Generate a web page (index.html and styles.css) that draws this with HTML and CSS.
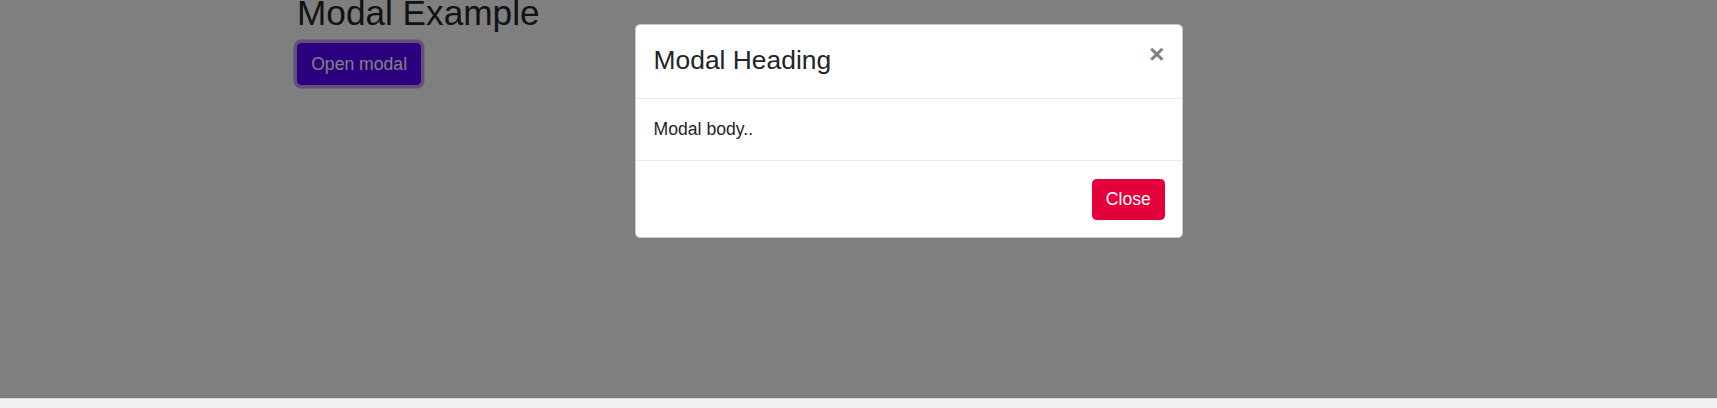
FILE: index.html
```html
<!DOCTYPE html>
<html lang="en">
<head>
<meta charset="utf-8">
<title>Modal Example</title>
<link rel="stylesheet" href="styles.css">
</head>
<body>
  <div class="viewport">
    <div class="container">
      <h2 class="page-title">Modal Example</h2>
      <button class="btn btn-primary" type="button">Open modal</button>
    </div>

    <div class="backdrop"></div>

    <div class="modal">
      <div class="modal-dialog">
        <div class="modal-header">
          <h4 class="modal-title">Modal Heading</h4>
          <button class="close" type="button" aria-label="Close">&times;</button>
        </div>
        <div class="modal-body">Modal body..</div>
        <div class="modal-footer">
          <button class="btn btn-danger" type="button">Close</button>
        </div>
      </div>
    </div>
  </div>
  <div class="hscroll"></div>
</body>
</html>
```

FILE: styles.css
```css
* {
  box-sizing: border-box;
}

html, body {
  margin: 0;
  padding: 0;
}

body {
  width: 1717px;
  height: 408px;
  display: flex;
  flex-direction: column;
  font-family: "Liberation Sans", Arial, sans-serif;
  font-size: 17.6px;
  line-height: 26.4px;
  color: #212529;
  background: #ffffff;
  overflow: hidden;
}

.viewport {
  position: relative;
  height: 398px;
  flex: none;
  overflow: hidden;
}

.container {
  padding-left: 297px;
}

.page-title {
  margin: -8px 0 9px 0;
  font-size: 35.2px;
  line-height: 42.2px;
  font-weight: 400;
  color: #212529;
}

.btn {
  display: inline-block;
  font-family: inherit;
  font-size: 17.6px;
  line-height: 26.4px;
  padding: 6.6px 13.2px;
  border: 1px solid transparent;
  border-radius: 4.4px;
  cursor: pointer;
}

.btn-primary {
  color: #ffffff;
  background: #5500ff;
  border-color: #5500ff;
  box-shadow: 0 0 0 3.5px rgba(170, 128, 255, 0.75);
}

.btn-danger {
  color: #ffffff;
  background: #e4003a;
  border-color: #e4003a;
}

.backdrop {
  position: absolute;
  inset: 0;
  background: rgba(0, 0, 0, 0.5);
}

.modal {
  position: absolute;
  inset: 0;
}

.modal-dialog {
  width: 548px;
  margin: 24px 0 0 635px;
  background: #ffffff;
  border: 1px solid rgba(0, 0, 0, 0.2);
  border-radius: 5.3px;
  display: flex;
  flex-direction: column;
}

.modal-header {
  display: flex;
  align-items: flex-start;
  padding: 16px 17.6px 18px 17.6px;
  border-bottom: 1px solid #e9ecef;
}

.modal-title {
  margin: 0;
  font-size: 26.4px;
  line-height: 39px;
  font-weight: 400;
}

.close {
  margin: -17.6px -17.6px -17.6px auto;
  padding: 17.6px;
  background: transparent;
  border: 0;
  font-family: inherit;
  font-size: 26.4px;
  line-height: 26.4px;
  font-weight: 700;
  color: #000000;
  opacity: 0.5;
  cursor: pointer;
}

.modal-body {
  padding: 17px 17.6px;
  line-height: 27px;
}

.modal-footer {
  display: flex;
  justify-content: flex-end;
  padding: 17.6px 17px 17px 17px;
  border-top: 1px solid #e9ecef;
}

.hscroll {
  flex: 1;
  background: #f1f1f1;
  border-top: 1px solid #dadada;
}
```
